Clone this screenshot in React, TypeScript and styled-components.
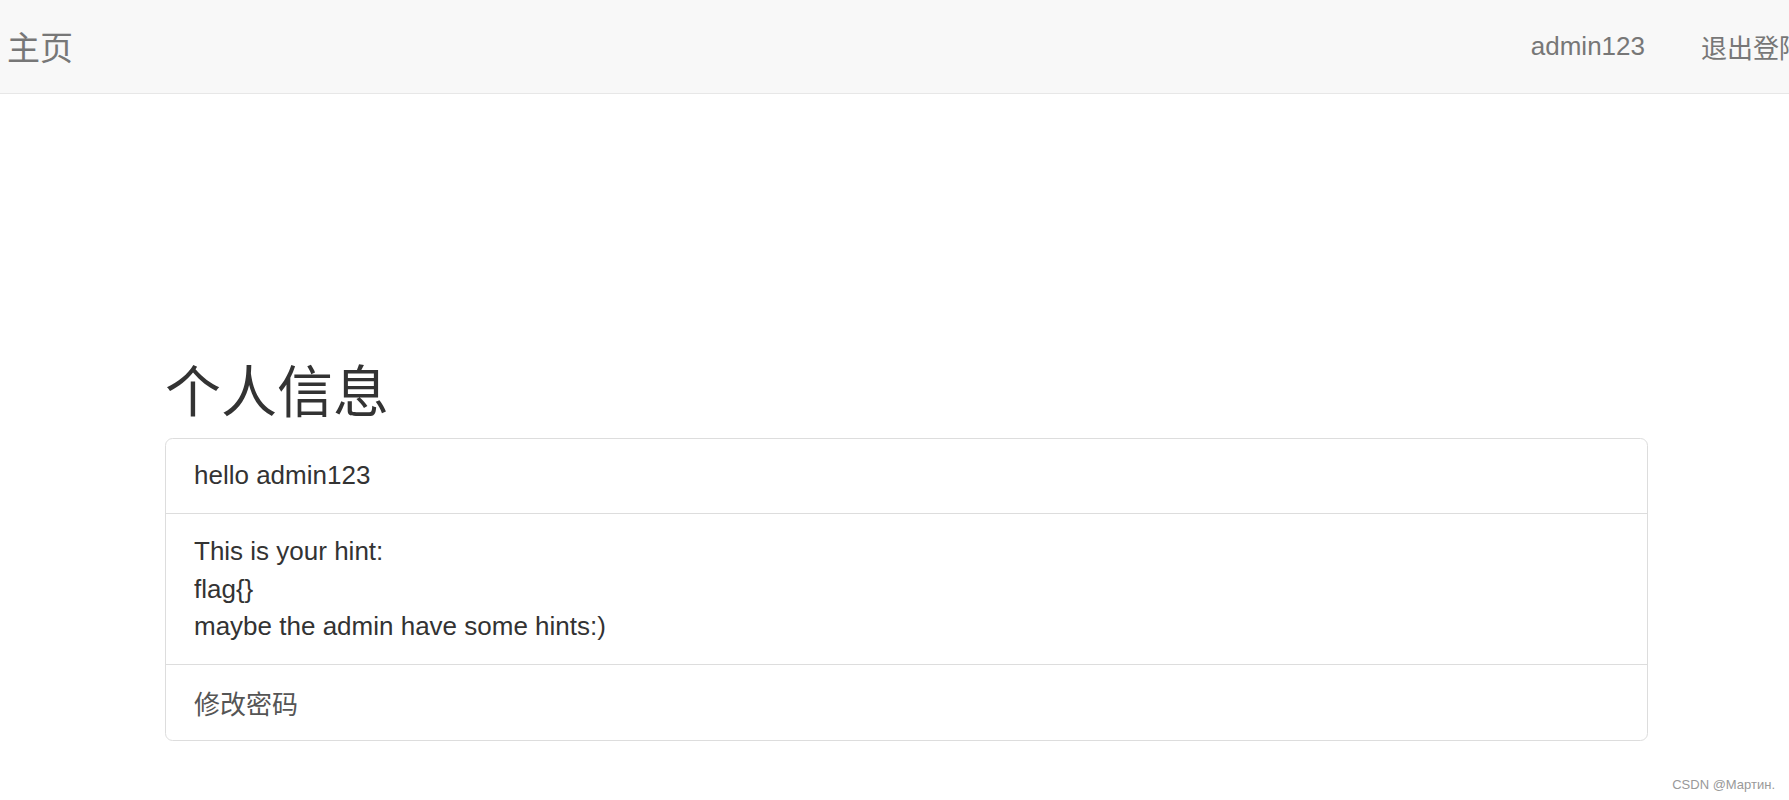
import React from 'react';
import styled, { createGlobalStyle } from 'styled-components';

const GlobalStyle = createGlobalStyle`
  html, body {
    margin: 0;
    padding: 0;
    background: #fff;
    overflow: hidden;
  }
  body {
    font-family: "Liberation Sans", Arial, "Noto Sans CJK SC", sans-serif;
    color: #333;
  }
`;

const Page = styled.div`
  width: 1789px;
  height: 800px;
  position: relative;
  overflow: hidden;
`;

const Navbar = styled.nav`
  height: 94px;
  box-sizing: border-box;
  background: #f8f8f8;
  border-bottom: 1px solid #e7e7e7;
  display: flex;
  justify-content: space-between;
  align-items: center;
  overflow: hidden;
`;

const Brand = styled.a`
  padding-left: 7px;
  font-family: "Noto Sans CJK SC", sans-serif;
  font-size: 33px;
  line-height: 40px;
  color: #777;
  text-decoration: none;
  margin-top: -1px;
`;

const NavLinks = styled.ul`
  display: flex;
  list-style: none;
  margin: 0 -44px 0 0;
  padding: 0;
`;

const NavLink = styled.li<{ cjk?: boolean }>`
  padding: 28px;
  font-size: 26px;
  line-height: 37.6px;
  color: #777;
  white-space: nowrap;
  font-family: ${({ cjk }) =>
    cjk ? '"Noto Sans CJK SC", sans-serif' : '"Liberation Sans", Arial, sans-serif'};
`;

const Main = styled.main`
  margin-left: 165px;
  width: 1483px;
  padding-top: 263px;
`;

const Title = styled.h2`
  margin: 0 0 19px;
  font-family: "Noto Sans CJK SC", sans-serif;
  font-weight: 400;
  font-size: 56px;
  line-height: 61.6px;
  color: #333;
`;

const ListGroup = styled.div`
  border: 1px solid #ddd;
  border-radius: 7.5px;
  overflow: hidden;
`;

const ListItem = styled.div<{ link?: boolean }>`
  padding: 18.6px 28px;
  font-size: 26px;
  line-height: 37.6px;
  color: ${({ link }) => (link ? '#555' : '#333')};
  font-family: ${({ link }) =>
    link ? '"Noto Sans CJK SC", sans-serif' : '"Liberation Sans", Arial, sans-serif'};
  & + & {
    border-top: 1px solid #ddd;
  }
`;

const Watermark = styled.div`
  position: absolute;
  right: 14px;
  bottom: 8px;
  font-family: "Liberation Sans", Arial, sans-serif;
  font-size: 13px;
  color: #999;
`;

const App: React.FC = () => {
  return (
    <Page>
      <GlobalStyle />
      <Navbar>
        <Brand href="#">主页</Brand>
        <NavLinks>
          <NavLink>admin123</NavLink>
          <NavLink cjk>退出登陆</NavLink>
        </NavLinks>
      </Navbar>
      <Main>
        <Title>个人信息</Title>
        <ListGroup>
          <ListItem>hello admin123</ListItem>
          <ListItem>
            This is your hint:
            <br />
            flag{'{}'}
            <br />
            maybe the admin have some hints:)
          </ListItem>
          <ListItem link>修改密码</ListItem>
        </ListGroup>
      </Main>
      <Watermark>CSDN @Мартин.</Watermark>
    </Page>
  );
};

export default App;
